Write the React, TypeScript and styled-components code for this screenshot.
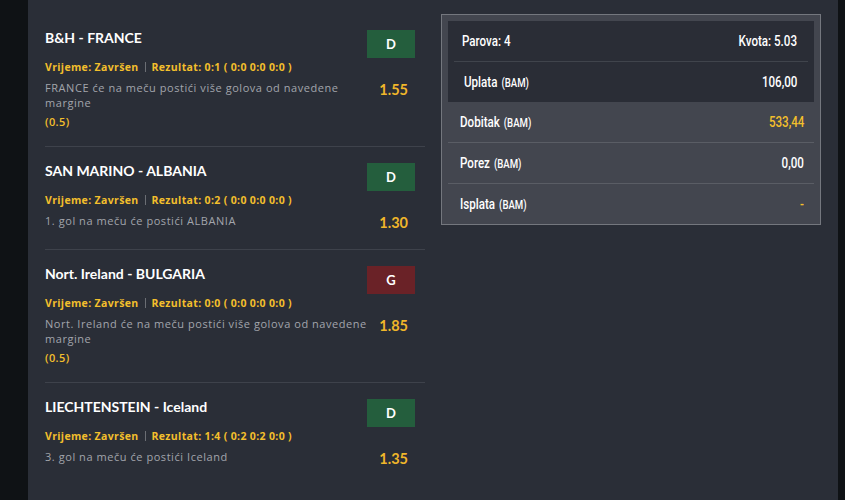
import styled, { createGlobalStyle } from 'styled-components'

const GlobalStyle = createGlobalStyle`
  html, body {
    margin: 0;
    padding: 0;
    background: #0f1215;
  }
  body {
    font-family: Lato, "Liberation Sans", sans-serif;
  }
`

type Outcome = 'D' | 'G'

interface Pair {
  match: string
  result: string
  tip: string
  margin?: string
  odds: string
  outcome: Outcome
}

const pairs: Pair[] = [
  {
    match: 'B&H - FRANCE',
    result: '0:1 ( 0:0 0:0 0:0 )',
    tip: 'FRANCE će na meču postići više golova od navedene margine',
    margin: '(0.5)',
    odds: '1.55',
    outcome: 'D',
  },
  {
    match: 'SAN MARINO - ALBANIA',
    result: '0:2 ( 0:0 0:0 0:0 )',
    tip: '1. gol na meču će postići ALBANIA',
    odds: '1.30',
    outcome: 'D',
  },
  {
    match: 'Nort. Ireland - BULGARIA',
    result: '0:0 ( 0:0 0:0 0:0 )',
    tip: 'Nort. Ireland će na meču postići više golova od navedene margine',
    margin: '(0.5)',
    odds: '1.85',
    outcome: 'G',
  },
  {
    match: 'LIECHTENSTEIN - Iceland',
    result: '1:4 ( 0:2 0:2 0:0 )',
    tip: '3. gol na meču će postići Iceland',
    odds: '1.35',
    outcome: 'D',
  },
]

const Page = styled.div`
  display: grid;
  grid-template-columns: 28px 810px 7px;
  min-height: 500px;
`

const Strip = styled.div`
  background: #0f1215;
`

const Main = styled.main`
  background: #2a2e37;
  display: grid;
  grid-template-columns: 380px 380px;
  column-gap: 16px;
  padding: 14px 17px 0;
  align-items: start;
`

const List = styled.div`
  display: flex;
  flex-direction: column;
`

const Row = styled.div`
  display: flex;
  padding: 16px 10px 16px 0;
  border-bottom: 1px solid #3e424b;

  &:last-child {
    border-bottom: none;
  }
`

const Info = styled.div`
  flex: 1;
  min-width: 0;
`

const Title = styled.div`
  color: #ffffff;
  font-size: 14px;
  font-weight: 700;
  line-height: 16px;
`

const Meta = styled.div`
  display: flex;
  align-items: center;
  margin-top: 13px;
  color: #f3bf2c;
  font-family: "Open Sans", sans-serif;
  font-size: 10.5px;
  font-weight: 700;
  letter-spacing: 0.35px;
  line-height: 16px;
  white-space: nowrap;
`

const Pipe = styled.span`
  display: inline-block;
  width: 1px;
  height: 10px;
  margin: 0 6px;
  background: #6b6e74;
`

const Tip = styled.div`
  margin-top: 5px;
  color: #a2a5ac;
  font-family: "Open Sans", sans-serif;
  font-size: 11px;
  letter-spacing: 0.55px;
  line-height: 15px;
`

const Margin = styled.div`
  margin-top: 4px;
  color: #f3bf2c;
  font-family: "Open Sans", sans-serif;
  font-size: 11px;
  font-weight: 600;
  letter-spacing: 0.4px;
  line-height: 16px;
`

const Side = styled.div`
  width: 48px;
  display: flex;
  flex-direction: column;
  align-items: flex-end;
`

const Badge = styled.div<{ $outcome: Outcome }>`
  width: 48px;
  height: 28px;
  display: flex;
  align-items: center;
  justify-content: center;
  background: ${({ $outcome }) => ($outcome === 'D' ? '#245e3d' : '#6a2227')};
  color: #ffffff;
  font-size: 13px;
  font-weight: 700;
`

const Odds = styled.div`
  margin-top: 22px;
  margin-right: 7px;
  color: #f0b62a;
  font-size: 14.5px;
  font-weight: 700;
  line-height: 20px;
`

const Summary = styled.div`
  border: 1px solid #74777e;
  background: #43464f;
  padding: 6px 6px 0;
  font-family: Roboto, "Liberation Sans", sans-serif;
  color: #ffffff;
`

const Inset = styled.div`
  background: #2a2d36;
  padding: 0 6px;
`

const InsetRow = styled.div<{ $indent?: number }>`
  height: 40px;
  display: flex;
  align-items: center;
  justify-content: space-between;
  padding: 0 11px 0 ${({ $indent }) => 8 + ($indent ?? 0)}px;

  & + & {
    border-top: 1px solid #40444c;
  }
`

const TotalRow = styled.div`
  height: 40px;
  display: flex;
  align-items: center;
  justify-content: space-between;
  padding: 0 10px 0 12px;

  & + & {
    border-top: 1px solid #5a5d65;
  }
`

/* condensed face is not installed: squeeze Roboto horizontally */
const Narrow = styled.span<{ $end?: boolean; $accent?: boolean }>`
  display: inline-block;
  font-size: 14.5px;
  font-weight: 500;
  white-space: nowrap;
  transform: scaleX(0.8);
  transform-origin: ${({ $end }) => ($end ? 'right' : 'left')} center;
  color: ${({ $accent }) => ($accent ? '#f3bf2c' : '#ffffff')};
`

const Unit = styled.span`
  margin-left: 5px;
  font-size: 12px;
`

export default function App() {
  return (
    <>
      <GlobalStyle />
      <Page>
        <Strip />
        <Main>
          <List>
            {pairs.map((p) => (
              <Row key={p.match}>
                <Info>
                  <Title>{p.match}</Title>
                  <Meta>
                    Vrijeme: Završen
                    <Pipe />
                    Rezultat: {p.result}
                  </Meta>
                  <Tip>{p.tip}</Tip>
                  {p.margin && <Margin>{p.margin}</Margin>}
                </Info>
                <Side>
                  <Badge $outcome={p.outcome}>{p.outcome}</Badge>
                  <Odds>{p.odds}</Odds>
                </Side>
              </Row>
            ))}
          </List>
          <Summary>
            <Inset>
              <InsetRow>
                <Narrow>Parova: 4</Narrow>
                <Narrow $end>Kvota: 5.03</Narrow>
              </InsetRow>
              <InsetRow $indent={2}>
                <Narrow>
                  Uplata<Unit>(BAM)</Unit>
                </Narrow>
                <Narrow $end>106,00</Narrow>
              </InsetRow>
            </Inset>
            <TotalRow>
              <Narrow>
                Dobitak<Unit>(BAM)</Unit>
              </Narrow>
              <Narrow $end $accent>
                533,44
              </Narrow>
            </TotalRow>
            <TotalRow>
              <Narrow>
                Porez<Unit>(BAM)</Unit>
              </Narrow>
              <Narrow $end>0,00</Narrow>
            </TotalRow>
            <TotalRow>
              <Narrow>
                Isplata<Unit>(BAM)</Unit>
              </Narrow>
              <Narrow $end $accent>
                -
              </Narrow>
            </TotalRow>
          </Summary>
        </Main>
        <Strip />
      </Page>
    </>
  )
}
